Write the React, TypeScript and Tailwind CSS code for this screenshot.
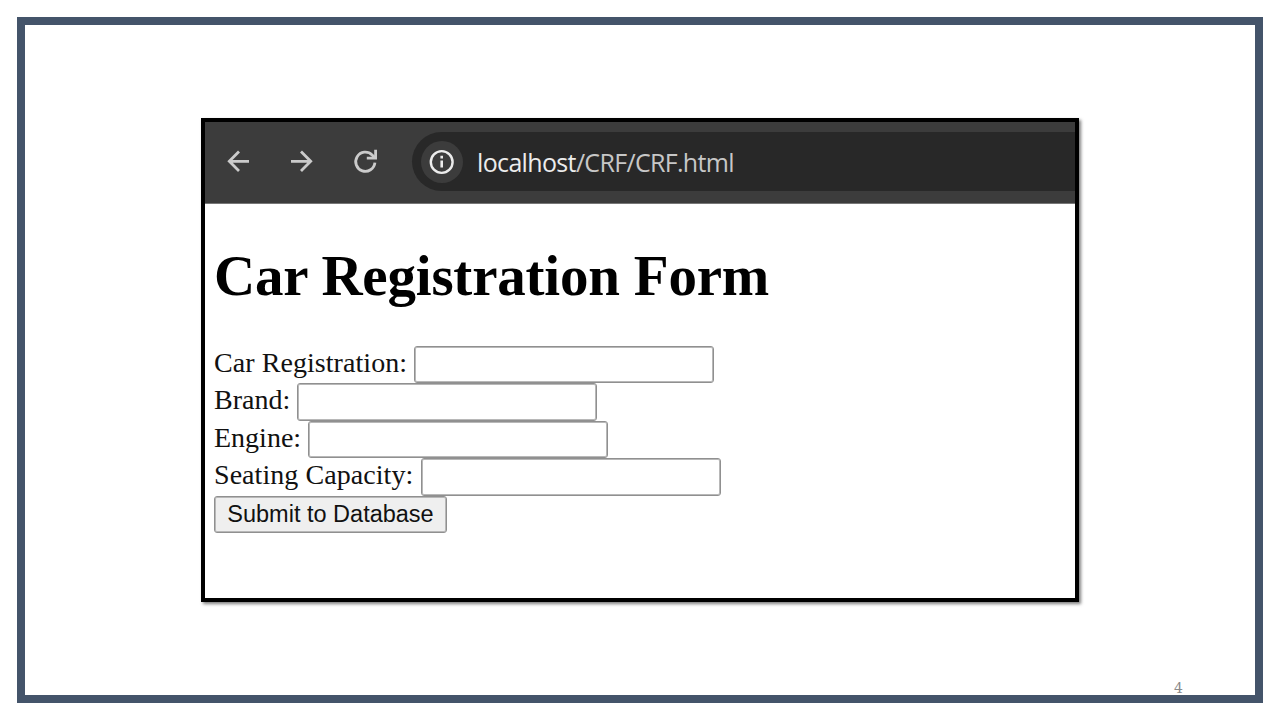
import React from "react";

type FieldProps = { label: string; name: string; labelClass: string; rowClass: string; boxClass: string };

const fields: FieldProps[] = [
  { label: "Car Registration:", name: "registration", labelClass: "w-[200px] tracking-[0.06px]", rowClass: "h-[37px]", boxClass: "h-[37px]" },
  { label: "Brand:", name: "brand", labelClass: "w-[83px]", rowClass: "h-[38px]", boxClass: "h-[38px]" },
  { label: "Engine:", name: "engine", labelClass: "w-[94px]", rowClass: "h-[37px]", boxClass: "h-[37px]" },
  { label: "Seating Capacity:", name: "capacity", labelClass: "w-[207px] tracking-[0.06px]", rowClass: "h-[38px]", boxClass: "h-[38px]" },
];

function Field({ label, name, labelClass, rowClass, boxClass }: FieldProps) {
  return (
    <div className={`flex items-start ${rowClass}`}>
      <label htmlFor={name} className={`${labelClass} shrink-0 whitespace-nowrap text-[28px] leading-[33px]`}>
        {label}
      </label>
      <input
        id={name}
        name={name}
        className={`${boxClass} w-[300px] rounded-[3px] border border-[#909090] bg-white shadow-[inset_0_0_0_1px_#b8b8b8] outline-none`}
      />
    </div>
  );
}

function Toolbar() {
  return (
    <div className="flex h-[82px] items-start border-b border-[#777] bg-[#3c3c3c] pt-[10px]">
      <div className="flex h-[59px] w-[207px] shrink-0 items-center">
        <svg className="h-[59px] w-[207px]" viewBox="0 0 207 59" fill="none" stroke="#cbcbcb" strokeWidth="2.8">
          <path d="M44 29.3H25M34 19.6l-9.7 9.7 9.7 9.7" />
          <path d="M86 29.3h19M96 19.6l9.7 9.7-9.7 9.7" />
          <path d="M169.9 30.6a9.6 9.6 0 1 1-2.8-7.7l2.6 2.6" />
          <path d="M170.6 17.7v8.5h-8.8" />
        </svg>
      </div>
      <div className="flex h-[59px] flex-1 items-center rounded-l-full bg-[#282828] pl-[9px]">
        <svg className="mt-px h-[42px] w-[42px] shrink-0" viewBox="0 0 42 42" fill="none">
          <circle cx="21" cy="21" r="21" fill="#3c3c3c" />
          <circle cx="20.7" cy="21" r="10.9" stroke="#ececec" strokeWidth="2.4" />
          <path d="M20.7 19.6v7M20.7 14.8v2.8" stroke="#ececec" strokeWidth="2.6" />
        </svg>
        <div className="ml-[14px] whitespace-nowrap font-['Open_Sans','Noto_Sans',sans-serif] text-[25px] leading-[36px] tracking-[-0.68px] text-[#c7c7c7]">
          <span className="tracking-[-0.65px] text-[#ececec]">localhost</span>/CRF/CRF.html
        </div>
      </div>
    </div>
  );
}

export default function App() {
  return (
    <div className="h-[720px] w-[1280px] overflow-hidden bg-white p-[17px]">
      <div className="flex h-[686px] w-[1246px] flex-col border-8 border-[#44546a] pl-[176px] pt-[93px]">
        <div className="h-[484px] w-[878px] shrink-0 border-4 border-black bg-white shadow-[2px_2px_3px_rgba(0,0,0,0.5)]">
          <Toolbar />
          <form
            className="pl-[9px] pt-[40px] font-['Liberation_Serif',serif] text-[#111]"
            onSubmit={(e: React.FormEvent) => e.preventDefault()}
          >
            <h1 className="mb-[38px] whitespace-nowrap text-[57px] font-bold leading-[64px] tracking-[-0.2px] text-black">
              Car Registration Form
            </h1>
            {fields.map((f) => (
              <Field key={f.name} {...f} />
            ))}
            <button className="flex h-[37px] w-[233px] justify-center whitespace-nowrap rounded-[3px] border border-[#909090] bg-[#efefef] pt-px font-['Liberation_Sans',sans-serif] text-[23.5px] leading-[33px] shadow-[inset_0_0_0_1px_#b8b8b8]">
              Submit to Database
            </button>
          </form>
        </div>
        <div className="mt-[78px] pr-[72px] text-right font-['DejaVu_Serif',serif] text-[14px] leading-[16px] text-[#8b8b8b]">
          4
        </div>
      </div>
    </div>
  );
}
